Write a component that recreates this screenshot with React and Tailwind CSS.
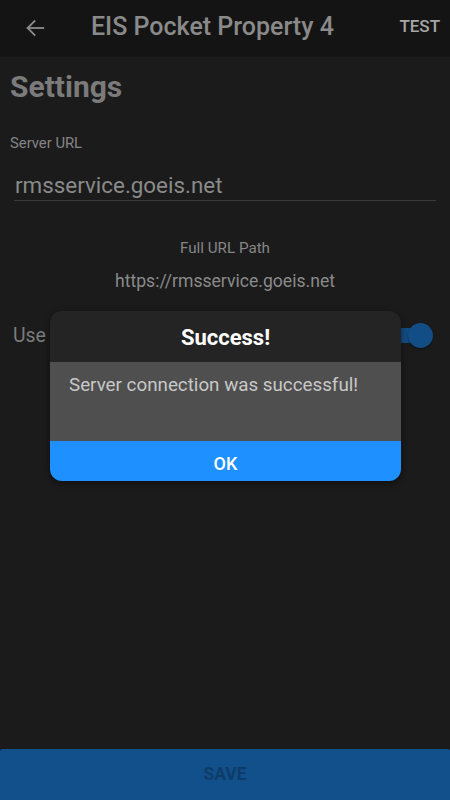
import React from "react";

export default function App() {
  return (
    <div className="relative h-[800px] w-[450px] flex flex-col bg-[#1b1b1b] overflow-hidden" style={{ fontFamily: "Roboto, 'Noto Sans', sans-serif" }}>
      <header className="h-[57px] flex items-center bg-[#141414] shrink-0 pb-[3px]">
        <div className="w-[91px] flex pl-[24px] pt-[1px]">
          <svg width="22" height="22" viewBox="0 0 24 24" fill="none" stroke="#8a8a8a" strokeWidth="2" strokeLinecap="square">
            <path d="M21 12H4" />
            <path d="M11.5 4.5L4 12l7.5 7.5" />
          </svg>
        </div>
        <div className="flex-1 text-[25px] font-medium text-[#8a8a8a] leading-[30px]">EIS Pocket Property 4</div>
        <div className="pr-[10px] text-[17px] font-medium text-[#a6a6a6]">TEST</div>
      </header>

      <main className="flex-1 flex flex-col px-[10px]">
        <h1 className="mt-[13px] text-[30px] font-bold text-[#7b7b7b] leading-[34px]">Settings</h1>
        <div className="mt-[30px] text-[14.8px] text-[#858585] leading-[18px]">Server URL</div>
        <div className="mt-[19px] mx-[4px] border-b border-[#3b3b3b] pb-[1px] pl-[1px] text-[22.4px] text-[#8a8a8a] leading-[28px]">rmsservice.goeis.net</div>
        <div className="mt-[38px] text-center text-[15.2px] text-[#858585] leading-[18px]">Full URL Path</div>
        <div className="mt-[13px] text-center text-[17.6px] text-[#8a8a8a] leading-[22px]">https://rmsservice.goeis.net</div>
        <div className="mt-[31px] flex items-center justify-between pl-[3px] pr-[7px] h-[25px]">
          <span className="text-[19.4px] text-[#7b7b7b]">Use</span>
          <div className="relative w-[40px] h-[25px] flex items-center">
            <div className="h-[15px] w-[34px] rounded-full bg-[#124d85]"></div>
            <div className="absolute right-0 top-0 w-[25px] h-[25px] rounded-full bg-[#124d85] shadow-[0_1px_2px_rgba(0,0,0,0.5)]"></div>
          </div>
        </div>
      </main>

      <button className="h-[51px] w-full bg-[#12508c] text-[17.5px] font-bold text-[#0e3c69] shrink-0 rounded-t-[2px]">SAVE</button>

      <div className="absolute inset-0 flex justify-center pt-[311px]">
        <div className="w-[351px] h-[170px] rounded-[12px] overflow-hidden flex flex-col shadow-[0_2px_6px_rgba(0,0,0,0.5)] ml-[1px]">
          <div className="h-[51px] bg-[#242424] flex items-center justify-center text-[22px] font-bold text-white pt-[1px]">Success!</div>
          <div className="h-[79px] bg-[#4f4f4f] px-[19px] pt-[12px] text-[18.8px] text-[#c8c8c8] leading-[22px]">Server connection was successful!</div>
          <div className="h-[40px] bg-[#1e90ff] flex items-center justify-center text-[18px] font-medium text-white pt-[4px]">OK</div>
        </div>
      </div>
    </div>
  );
}
